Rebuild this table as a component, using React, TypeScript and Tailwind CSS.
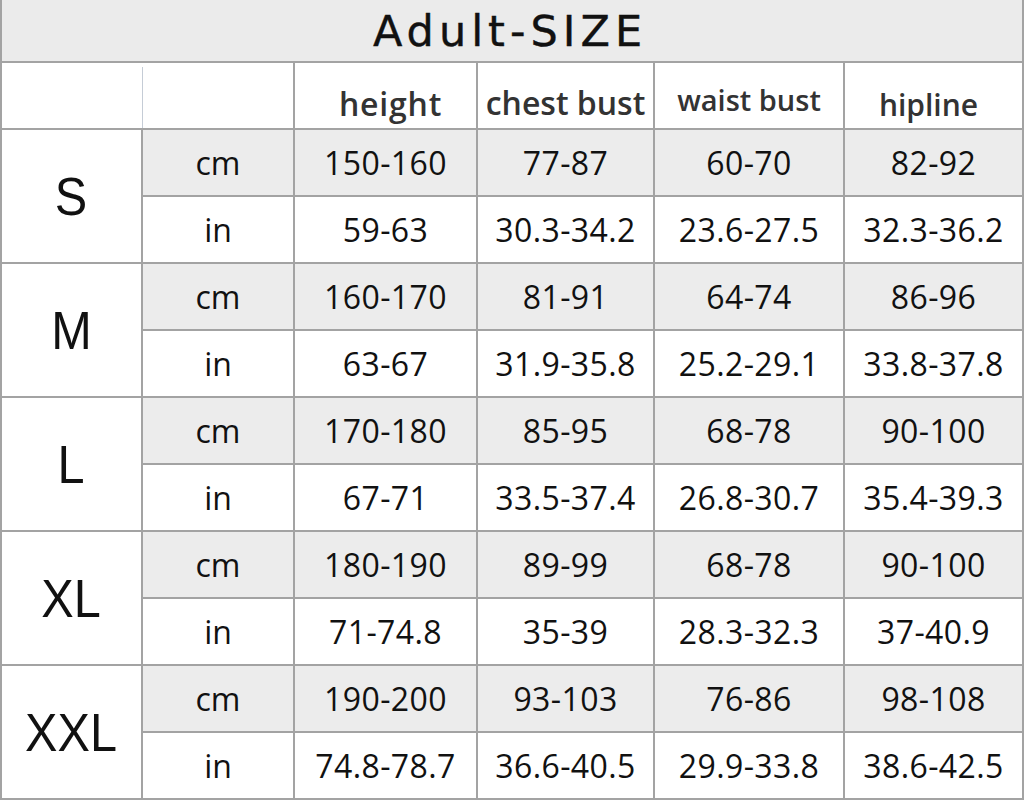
const sizes = [
  {
    name: "S",
    cm: ["150-160", "77-87", "60-70", "82-92"],
    inch: ["59-63", "30.3-34.2", "23.6-27.5", "32.3-36.2"],
  },
  {
    name: "M",
    cm: ["160-170", "81-91", "64-74", "86-96"],
    inch: ["63-67", "31.9-35.8", "25.2-29.1", "33.8-37.8"],
  },
  {
    name: "L",
    cm: ["170-180", "85-95", "68-78", "90-100"],
    inch: ["67-71", "33.5-37.4", "26.8-30.7", "35.4-39.3"],
  },
  {
    name: "XL",
    cm: ["180-190", "89-99", "68-78", "90-100"],
    inch: ["71-74.8", "35-39", "28.3-32.3", "37-40.9"],
  },
  {
    name: "XXL",
    cm: ["190-200", "93-103", "76-86", "98-108"],
    inch: ["74.8-78.7", "36.6-40.5", "29.9-33.8", "38.6-42.5"],
  },
];

const body = "font-['Open_Sans',sans-serif]";

const App = () => {
  return (
    <div className="w-[1024px] h-[800px] bg-[#a3a3a3] px-[2px] pb-[2px] overflow-hidden">
      <div className="grid grid-cols-[139px_150px_181px_175px_188px_177px] grid-rows-[61px_65px_repeat(10,65px)] gap-[2px]">
        {/* title */}
        <div className="col-span-6 bg-[#ebebeb] flex items-center justify-center pt-[2px] pr-[4px]">
          <span className="font-['DejaVu_Sans',sans-serif] text-[43px] tracking-[5px] text-[#111] leading-none [-webkit-text-stroke:0.4px_#111]">
            Adult-SIZE
          </span>
        </div>

        {/* header */}
        <div className="col-span-2 bg-white relative">
          <div className="absolute left-[140px] top-[4px] bottom-0 w-[1px] bg-[#c5ccd6]"></div>
        </div>
        <div className={`bg-white flex justify-center items-center pt-[16px] pl-[10px] ${body} font-semibold text-[32px] tracking-[0.8px] text-[#333]`}>
          height
        </div>
        <div className={`bg-white flex justify-center items-center pt-[14px] ${body} font-semibold text-[32px] text-[#333] whitespace-nowrap`}>
          chest bust
        </div>
        <div className={`bg-white flex justify-center items-center pt-[8px] ${body} font-semibold text-[29px] text-[#333] whitespace-nowrap`}>
          waist bust
        </div>
        <div className={`bg-white flex justify-center items-center pt-[18px] pr-[10px] ${body} font-semibold text-[30px] text-[#333]`}>
          hipline
        </div>

        {sizes.map((s) => (
          <div key={s.name} className="contents">
            <div className="row-span-2 bg-white flex items-center justify-center">
              <span className="font-['Liberation_Sans',sans-serif] text-[54px] text-[#111] leading-none scale-x-[0.9]">
                {s.name}
              </span>
            </div>
            <div className={`bg-[#ececec] flex items-center justify-center ${body} text-[32px] text-[#111]`}>
              cm
            </div>
            {s.cm.map((v, i) => (
              <div key={"cm" + i} className={`bg-[#ececec] flex items-center justify-center ${body} text-[32px] tracking-[0.4px] text-[#111] whitespace-nowrap`}>
                {v}
              </div>
            ))}
            <div className={`bg-white flex items-center justify-center ${body} text-[32px] text-[#111]`}>
              in
            </div>
            {s.inch.map((v, i) => (
              <div key={"in" + i} className={`bg-white flex items-center justify-center ${body} text-[32px] tracking-[0.4px] text-[#111] whitespace-nowrap`}>
                {v}
              </div>
            ))}
          </div>
        ))}
      </div>
    </div>
  );
};

export default App;
